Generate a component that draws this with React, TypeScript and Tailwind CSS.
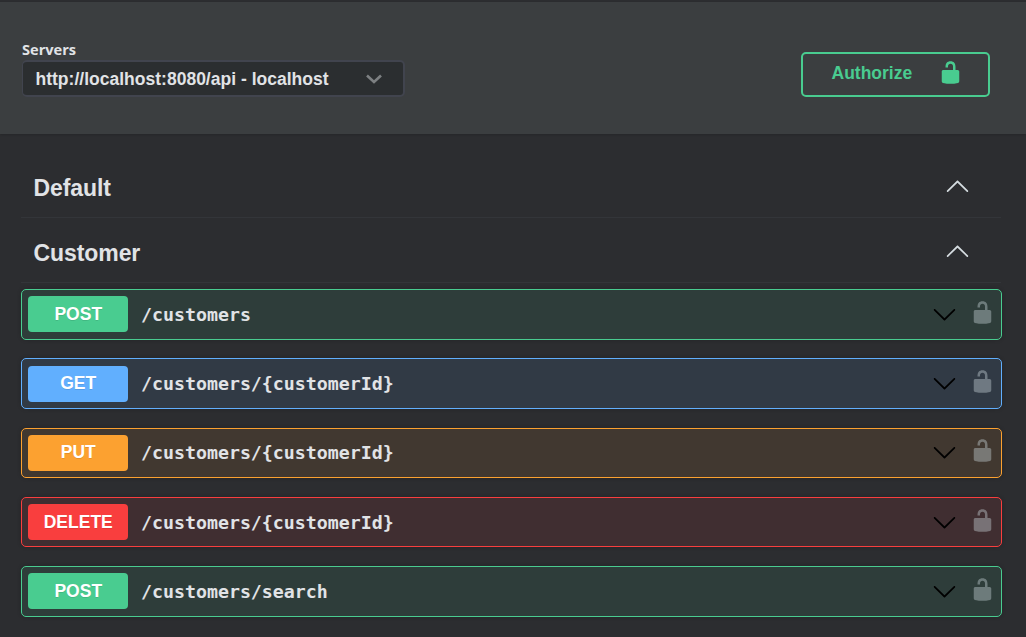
type Method = 'POST' | 'GET' | 'PUT' | 'DELETE';

const styles: Record<Method, { row: string; badge: string }> = {
  POST: { row: 'border-[#49cc90] bg-[#49cc90]/10', badge: 'bg-[#49cc90]' },
  GET: { row: 'border-[#61affe] bg-[#61affe]/10', badge: 'bg-[#61affe]' },
  PUT: { row: 'border-[#fca130] bg-[#fca130]/10', badge: 'bg-[#fca130]' },
  DELETE: { row: 'border-[#f93e3e] bg-[#f93e3e]/10', badge: 'bg-[#f93e3e]' },
};

const operations: { method: Method; path: string }[] = [
  { method: 'POST', path: '/customers' },
  { method: 'GET', path: '/customers/{customerId}' },
  { method: 'PUT', path: '/customers/{customerId}' },
  { method: 'DELETE', path: '/customers/{customerId}' },
  { method: 'POST', path: '/customers/search' },
];

function Unlock({ className }: { className: string }) {
  return (
    <svg viewBox="0 0 20 20" fill="currentColor" className={`size-[25px] shrink-0 ${className}`}>
      <path d="M15.8 8H14V5.6C14 2.703 12.665 1 10 1 7.334 1 6 2.703 6 5.6V6h2v-.801C8 3.754 8.797 3 10 3c1.203 0 2 .754 2 2.199V8H4c-.553 0-1 .646-1 1.199V17c0 .549.428 1.139.951 1.307l1.197.387C5.672 18.861 6.55 19 7.1 19h5.8c.549 0 1.428-.139 1.951-.307l1.196-.387c.524-.167.953-.757.953-1.306V9.199C17 8.646 16.352 8 15.8 8z" />
    </svg>
  );
}

function Arrow({ className }: { className: string }) {
  return (
    <svg viewBox="0 0 20 20" fill="currentColor" className={`size-[25px] shrink-0 ${className}`}>
      <path d="M17.418 14.908c.272.268.709.268.979 0s.271-.701 0-.969l-7.908-7.83c-.27-.268-.707-.268-.979 0l-7.908 7.83c-.27.268-.271.701 0 .969s.709.268.979 0L10 7.767z" />
    </svg>
  );
}

function TagHeader({ name }: { name: string }) {
  return (
    <h3 className="mr-px flex h-[65px] items-center justify-between border-b border-[#333539] pr-[31px] pl-[12.5px] text-[23px] leading-7 font-bold tracking-[-0.08px]">
      <span className="pt-1.5">{name}</span>
      <Arrow className="text-[#d5dce0]" />
    </h3>
  );
}

export default function App() {
  return (
    <div className="h-[637px] overflow-hidden bg-[#2c2d30] pt-0.5 font-['Liberation_Sans',Arial,sans-serif] text-[#e1e3e6]">
      <header className="flex h-[132px] items-start justify-between bg-[#3b3e40] pr-9 pl-[22px] shadow-[0_1px_2px_rgba(0,0,0,0.15)]">
        <div className="pt-[37px]">
          <div className="h-[21px] font-['Open_Sans',sans-serif] text-[14.6px] leading-5 font-bold">Servers</div>
          <div className="flex h-[37px] w-[383px] items-center justify-between rounded-[5px] border-2 border-l border-[#41444e] bg-[#2b2e30] pr-5 pl-[12.5px] text-[17.5px] font-bold">
            <span className="pt-0.5 tracking-[0.01px]">http://localhost:8080/api - localhost</span>
            <svg viewBox="0 0 18 12" className="h-3 w-[18px] text-[#7d8082]" fill="none" stroke="currentColor" strokeWidth="2.6">
              <path d="M2 2.5 9 9l7-6.5" />
            </svg>
          </div>
        </div>
        <button className="mt-[50px] flex h-[45px] w-[189px] items-start justify-between rounded-[5px] border-2 border-[#49cc90] pt-[5px] pr-[25px] pl-[28.5px] text-[17.5px] font-bold text-[#49cc90]">
          <span className="leading-[28px]">Authorize</span>
          <Unlock className="mt-px" />
        </button>
      </header>
      <main className="pt-[19px] pr-6 pl-[21px]">
        <TagHeader name="Default" />
        <TagHeader name="Customer" />
        <div className="flex flex-col gap-[18.75px] pt-1.5">
          {operations.map(({ method, path }, i) => (
            <div
              key={i}
              className={`flex h-[50.5px] items-start rounded-[5px] border p-[6.25px] shadow-[0_0_4px_rgba(0,0,0,0.19)] ${styles[method].row}`}
            >
              <span
                className={`flex h-9 w-[100px] items-start justify-center rounded-[4px] text-[17.5px] leading-9 font-bold text-white [text-shadow:0_1px_0_rgba(0,0,0,0.1)] ${styles[method].badge}`}
              >
                <span className="-mt-[0.45px]">{method}</span>
              </span>
              <span className="-mt-[0.45px] ml-[12.75px] flex-1 font-['DejaVu_Sans_Mono',monospace] text-[18.25px] leading-[37px] font-bold">
                {path}
              </span>
              <Arrow className="mt-[6.5px] mr-[13px] rotate-180 text-black" />
              <Unlock className="mt-[3.55px] text-[#ccd9dd] opacity-40" />
            </div>
          ))}
        </div>
      </main>
    </div>
  );
}
